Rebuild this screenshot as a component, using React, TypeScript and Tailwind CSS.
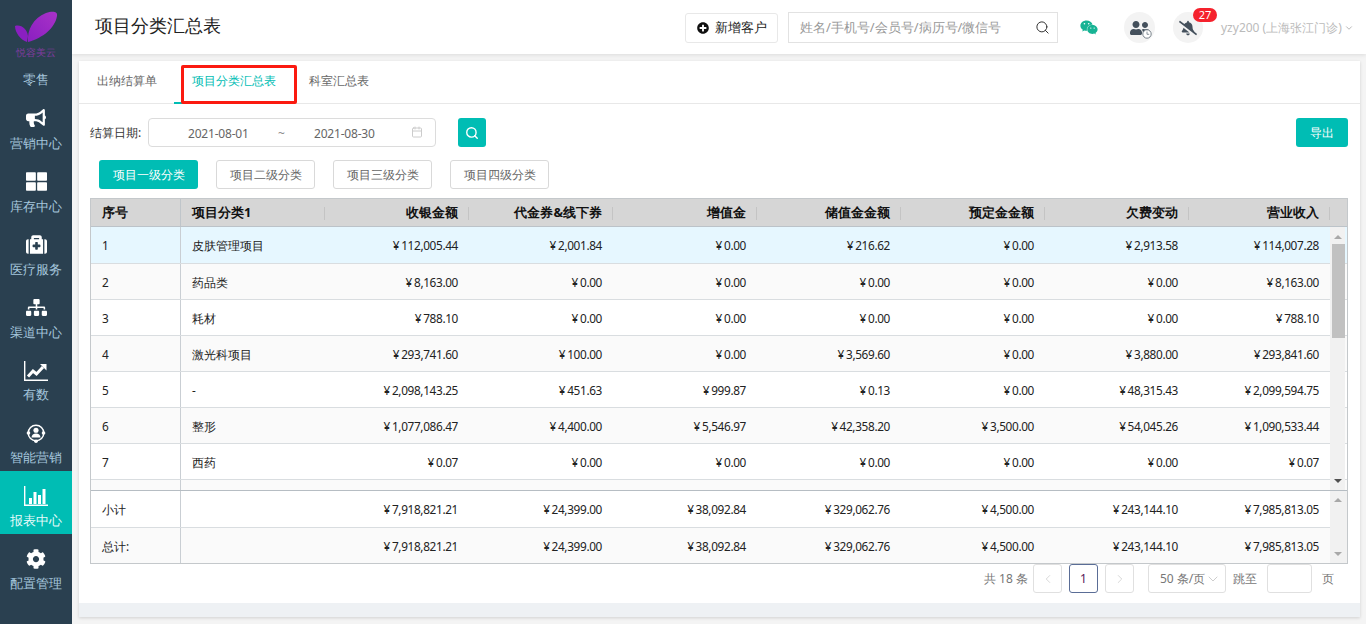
import { ReactNode } from 'react';
import {
  FaBullhorn,
  FaThLarge,
  FaMedkit,
  FaSitemap,
  FaCog,
  FaWeixin,
  FaBellSlash,
  FaUserFriends,
  FaPlusCircle,
} from 'react-icons/fa';
import { ChevronDown, ChevronLeft, ChevronRight, Search, Calendar } from 'lucide-react';

const GRID = 'grid grid-cols-[90px_144px_144px_144px_144px_144px_144px_144px_141px]';

const rows = [
  ['1', '皮肤管理项目', '112,005.44', '2,001.84', '0.00', '216.62', '0.00', '2,913.58', '114,007.28'],
  ['2', '药品类', '8,163.00', '0.00', '0.00', '0.00', '0.00', '0.00', '8,163.00'],
  ['3', '耗材', '788.10', '0.00', '0.00', '0.00', '0.00', '0.00', '788.10'],
  ['4', '激光科项目', '293,741.60', '100.00', '0.00', '3,569.60', '0.00', '3,880.00', '293,841.60'],
  ['5', '-', '2,098,143.25', '451.63', '999.87', '0.13', '0.00', '48,315.43', '2,099,594.75'],
  ['6', '整形', '1,077,086.47', '4,400.00', '5,546.97', '42,358.20', '3,500.00', '54,045.26', '1,090,533.44'],
  ['7', '西药', '0.07', '0.00', '0.00', '0.00', '0.00', '0.00', '0.07'],
];

const totals = ['7,918,821.21', '24,399.00', '38,092.84', '329,062.76', '4,500.00', '243,144.10', '7,985,813.05'];

const headers = ['收银金额', '代金券&线下券', '增值金', '储值金金额', '预定金金额', '欠费变动', '营业收入'];

function SmartIcon() {
  return (
    <svg viewBox="0 0 24 24" className="w-[22px] h-[22px]" fill="none">
      <circle cx="12" cy="12" r="8.5" stroke="white" strokeWidth="1.6" />
      <circle cx="12" cy="9" r="2.8" fill="white" />
      <path d="M7 17c.4-3 2.200-4.500 5-4.500s4.600 1.500 5 4.500z" fill="white" />
      <circle cx="3.800" cy="12" r="2" fill="white" />
      <circle cx="20.200" cy="12" r="2" fill="white" />
      <circle cx="12" cy="21" r="2" fill="white" />
    </svg>
  );
}

function LineChartIcon() {
  return (
    <svg viewBox="0 0 24 20" className="w-[24px] h-[20px] translate-y-[1px]" fill="none">
      <path d="M.7 0v19.200H24" stroke="white" strokeWidth="1.400" />
      <path d="M4 15.500l5-5.500 3.500 3L19 6" stroke="white" strokeWidth="3" />
      <path d="M16 3h6.500v6.500z" fill="white" />
    </svg>
  );
}

function BarChartIcon() {
  return (
    <svg viewBox="0 0 24 20" className="w-[24px] h-[20px]" fill="white">
      <path d="M.7 0v19.200H24" stroke="white" strokeWidth="1.400" fill="none" />
      <rect x="5" y="12" width="3" height="6" />
      <rect x="9.500" y="6" width="3" height="12" />
      <rect x="14" y="9" width="3" height="9" />
      <rect x="18.500" y="3" width="3" height="15" />
    </svg>
  );
}

function Logo() {
  return (
    <svg viewBox="14 11 44 33" className="w-[44px] h-[33px]">
      <defs>
        <linearGradient id="wing" x1="0" y1="1" x2="1" y2="0">
          <stop offset="0" stopColor="#8a1fc0" />
          <stop offset="1" stopColor="#a932c8" />
        </linearGradient>
      </defs>
      <path d="M28 42C27 30 33 18 46 13c6-2 12-2 11 3-2 12-14 22-29 26z" fill="url(#wing)" />
      <path d="M15 26c6-2 12 3 13 10l-1 6c-6-2-12-9-12-16z" fill="#8a1fc0" />
    </svg>
  );
}

function NavItem({ icon, label, active, tight }: { icon: ReactNode; label: string; active?: boolean; tight?: boolean }) {
  return (
    <div className={`h-[63px] flex flex-col items-center justify-start pt-[13px] ${active ? 'bg-[#00bdb4] text-[#e6fbfa]' : 'text-[#a5c6dc]'}`}>
      <div className="h-[24px] flex items-center justify-center text-white">{icon}</div>
      <div className={`text-[13px] leading-[20px] ${tight ? 'mt-[2px]' : 'mt-[3px]'}`}>{label}</div>
    </div>
  );
}

function Sidebar() {
  return (
    <aside className="absolute left-0 top-0 w-[72px] h-[624px] bg-[#2a4050]">
      <div className="h-[69px] flex flex-col items-center pt-[11px]">
        <Logo />
        <div className="text-[10px] leading-[12px] text-[#7f3b9e] mt-[2px]">悦容美云</div>
      </div>
      <div className="text-[13px] leading-[20px] text-[#a5c6dc] text-center mb-[4px]">零售</div>
      <NavItem icon={<FaBullhorn className="w-[20px] h-[20px]" />} label="营销中心" />
      <NavItem icon={<FaThLarge className="w-[21px] h-[21px]" />} label="库存中心" />
      <NavItem icon={<FaMedkit className="w-[21px] h-[21px]" />} label="医疗服务" />
      <NavItem icon={<FaSitemap className="w-[21px] h-[21px]" />} label="渠道中心" />
      <NavItem icon={<LineChartIcon />} label="有数" tight />
      <NavItem icon={<SmartIcon />} label="智能营销" tight />
      <NavItem icon={<BarChartIcon />} label="报表中心" active tight />
      <NavItem icon={<FaCog className="w-[20px] h-[20px]" />} label="配置管理" tight />
    </aside>
  );
}

function Header() {
  return (
    <header className="absolute left-[72px] right-0 top-0 h-[54px] bg-white shadow-[0_1px_4px_rgba(0,0,0,0.1)] flex items-center">
      <h1 className="ml-[23px] mb-[4px] text-[18px] text-[#222] font-normal">项目分类汇总表</h1>
      <div className="absolute left-[613px] top-[13px] w-[93px] h-[30px] border border-[#e8e8e8] rounded-[3px] flex items-center pl-[11px] text-[13px] text-[#222]">
        <FaPlusCircle className="w-[12px] h-[12px] mr-[6px] text-[#111]" />
        新增客户
      </div>
      <div className="absolute left-[716px] top-[12px] w-[270px] h-[31px] border border-[#e2e2e2] flex items-center pl-[11px] text-[13px] text-[#999]">
        姓名/手机号/会员号/病历号/微信号
        <Search className="absolute right-[7px] top-[7px] w-[15px] h-[15px] text-[#333]" strokeWidth={1.6} />
      </div>
      <FaWeixin className="absolute left-[1008px] top-[19px] w-[18px] h-[17px] text-[#17b394]" />
      <div className="absolute left-[1052px] top-[12px] w-[31px] h-[31px] rounded-full bg-[#f3f3f3] flex items-center justify-center">
        <FaUserFriends className="w-[20px] h-[18px] text-[#44505c]" />
        <svg viewBox="0 0 10 10" className="absolute left-[18px] top-[17px] w-[10px] h-[10px]" fill="#fff">
          <circle cx="5" cy="5" r="4.200" stroke="#6b7680" strokeWidth="0.9" />
          <path d="M5 2.600V5.300H7.200" fill="none" stroke="#6b7680" strokeWidth="0.8" />
        </svg>
      </div>
      <div className="absolute left-[1101px] top-[12px] w-[30px] h-[31px] rounded-full bg-[#f3f3f3] flex items-center justify-center">
        <FaBellSlash className="w-[18px] h-[18px] text-[#44505c]" />
      </div>
      <div className="absolute left-[1121px] top-[8px] w-[24px] h-[14px] rounded-full bg-[#f5222d] text-white text-[11px] leading-[14px] text-center">27</div>
      <div className="absolute left-[1149px] top-[19px] text-[12px] leading-[17px] text-[#bbb] whitespace-nowrap flex items-center">
        yzy200 (上海张江门诊)
        <ChevronDown className="w-[10px] h-[10px] ml-[2px] text-[#aaa]" />
      </div>
    </header>
  );
}

function Tabs() {
  return (
    <div className="relative h-[43px] border-b border-[#e8e8e8] text-[11.8px]">
      <div className="absolute left-[18px] top-[11px] text-[#666]">出纳结算单</div>
      <div className="absolute left-[113px] top-[11px] text-[#00bdb4]">项目分类汇总表</div>
      <div className="absolute left-[95px] top-[41px] w-[115px] h-[2px] bg-[#00bdb4]" />
      <div className="absolute left-[230px] top-[11px] text-[#666]">科室汇总表</div>
      <div className="absolute left-[102px] top-[4px] w-[116px] h-[39px] border-[3px] border-[#fb1a10] rounded-[2px]" />
    </div>
  );
}

function Filters() {
  const levels = ['项目二级分类', '项目三级分类', '项目四级分类'];
  return (
    <>
      <div className="absolute left-[11px] top-[63px] text-[12px] leading-[17px] text-[#333]">结算日期:</div>
      <div className="absolute left-[69px] top-[57px] w-[288px] h-[29px] border border-[#dcdcdc] rounded-[4px] text-[12px] text-[#666] tracking-[-0.2px]">
        <span className="absolute left-[39px] top-[6px]">2021-08-01</span>
        <span className="absolute left-[129px] top-[6px] text-[#888]">~</span>
        <span className="absolute left-[165px] top-[6px]">2021-08-30</span>
        <Calendar className="absolute right-[12px] top-[7px] w-[12px] h-[12px] text-[#ccc]" />
      </div>
      <div className="absolute left-[379px] top-[57px] w-[28px] h-[29px] rounded-[3px] bg-[#00bdb4] flex items-center justify-center">
        <Search className="w-[14px] h-[14px] text-white" strokeWidth={2.4} />
      </div>
      <div className="absolute left-[1217px] top-[57px] w-[52px] h-[29px] rounded-[3px] bg-[#00bdb4] text-white text-[12px] flex items-center justify-center">导出</div>
      <div className="absolute left-[20px] top-[99px] w-[99px] h-[29px] rounded-[3px] bg-[#00bdb4] text-white text-[12px] flex items-center justify-center">项目一级分类</div>
      {levels.map((label, i) => (
        <div
          key={label}
          className={`absolute top-[99px] w-[99px] h-[29px] rounded-[3px] border border-[#d9d9d9] text-[#666] text-[12px] flex items-center justify-center ${
            i === 0 ? 'left-[137px]' : i === 1 ? 'left-[254px]' : 'left-[371px]'
          }`}
        >
          {label}
        </div>
      ))}
    </>
  );
}

function Row({ cells, height, stripe, bg }: { cells: string[]; height: string; stripe?: boolean; bg?: string }) {
  return (
    <div className={`${GRID} ${height} ${bg ?? (stripe ? 'bg-[#fafafa]' : 'bg-white')} border-b border-[#d9dde0] text-[11.8px] text-[#222]`}>
      <div className="border-r border-[#c9ced3] pl-[11px] pt-[2px] flex items-center">{cells[0]}</div>
      <div className="pl-[11px] pt-[2px] flex items-center">{cells[1]}</div>
      {cells.slice(2).map((v, i) => (
        <div key={i} className="flex items-center justify-end pr-[11px] pt-[2px] tracking-[-0.35px]">
          <span className="mr-[2px]">¥</span>
          {v}
        </div>
      ))}
    </div>
  );
}

function DataTable() {
  return (
    <div className="absolute left-[11px] top-[137px] w-[1258px] h-[366px] border border-[#c4c8cb] overflow-hidden">
      <div className={`${GRID} h-[28px] bg-[#d6d6d6] border-b border-[#bcc3c9] text-[12.8px] font-bold text-[#111]`}>
        <div className="border-r border-[#bfc5ca] pl-[11px] flex items-center">序号</div>
        <div className="relative pl-[11px] flex items-center">
          项目分类1
          <span className="absolute right-0 top-[8px] h-[13px] w-px bg-[#c4c4c4]" />
        </div>
        {headers.map((h) => (
          <div key={h} className="relative flex items-center justify-end pr-[11px]">
            {h}
            <span className="absolute right-0 top-[8px] h-[13px] w-px bg-[#c4c4c4]" />
          </div>
        ))}
      </div>
      <div className="relative h-[264px] overflow-hidden border-b border-[#b6bdc3]">
        <Row cells={rows[0]} height="h-[37px]" bg="bg-[#e6f7ff]" />
        {rows.slice(1).map((r, i) => (
          <Row key={r[0]} cells={r} height="h-[36px]" stripe={i % 2 === 0} />
        ))}
        <div className={`${GRID} h-[10px] bg-[#fafafa]`}>
          <div className="border-r border-[#c9ced3]" />
        </div>
        <div className="absolute left-[1239px] top-0 w-[15px] h-[264px] bg-[#f1f1f1]">
          <div className="absolute left-[2px] top-[17px] w-[13px] h-[94px] bg-[#c1c1c1]" />
          <div className="absolute left-[4px] top-[8px] w-0 h-0 border-x-[4px] border-x-transparent border-b-[4px] border-b-[#a8a8a8]" />
          <div className="absolute left-[4px] top-[252px] w-0 h-0 border-x-[4px] border-x-transparent border-t-[4px] border-t-[#505050]" />
        </div>
      </div>
      <div className="relative">
        <Row cells={['小计', '', ...totals]} height="h-[37px]" />
        <Row cells={['总计:', '', ...totals]} height="h-[36px]" stripe />
        <div className="absolute left-[1239px] top-0 w-[17px] h-[72px] bg-[#f1f1f1]">
          <div className="absolute left-[4px] top-[7px] w-0 h-0 border-x-[4px] border-x-transparent border-b-[4px] border-b-[#a8a8a8]" />
          <div className="absolute left-[4px] top-[61px] w-0 h-0 border-x-[4px] border-x-transparent border-t-[4px] border-t-[#a8a8a8]" />
        </div>
      </div>
    </div>
  );
}

function Pagination() {
  return (
    <div className="absolute left-0 top-0 text-[12px] text-[#777]">
      <span className="absolute left-[905px] top-[509px] whitespace-nowrap text-[#777]">共 18 条</span>
      <div className="absolute left-[954px] top-[503px] w-[29px] h-[29px] border border-[#e0e0e0] rounded-[3px] flex items-center justify-center">
        <ChevronLeft className="w-[14px] h-[14px] text-[#ccc]" strokeWidth={1.3} />
      </div>
      <div className="absolute left-[990px] top-[503px] w-[29px] h-[29px] border border-[#5a6d96] rounded-[3px] flex items-center justify-center text-[#5a1a5a]">1</div>
      <div className="absolute left-[1026px] top-[503px] w-[29px] h-[29px] border border-[#e0e0e0] rounded-[3px] flex items-center justify-center">
        <ChevronRight className="w-[14px] h-[14px] text-[#ccc]" strokeWidth={1.3} />
      </div>
      <div className="absolute left-[1069px] top-[503px] w-[78px] h-[29px] border border-[#e0e0e0] rounded-[3px] flex items-center pl-[11px] whitespace-nowrap">
        50 条/页
        <ChevronDown className="w-[16px] h-[16px] text-[#bbb]" strokeWidth={1.1} />
      </div>
      <span className="absolute left-[1154px] top-[509px] whitespace-nowrap">跳至</span>
      <div className="absolute left-[1188px] top-[503px] w-[45px] h-[29px] border border-[#e0e0e0] rounded-[3px]" />
      <span className="absolute left-[1243px] top-[509px] whitespace-nowrap">页</span>
    </div>
  );
}

export default function App() {
  return (
    <div className="relative w-[1366px] h-[624px] overflow-hidden bg-[#f4f4f4] font-['Roboto','Noto_Sans_CJK_SC',sans-serif]">
      <Header />
      <Sidebar />
      <main className="absolute left-[79px] top-[61px] w-[1281px] h-[556px] bg-white shadow-[0_1px_3px_rgba(0,0,0,0.15)]">
        <Tabs />
        <Filters />
        <DataTable />
        <Pagination />
        <div className="absolute left-0 bottom-0 w-full h-[14px] bg-[#eef1f4]" />
      </main>
    </div>
  );
}
